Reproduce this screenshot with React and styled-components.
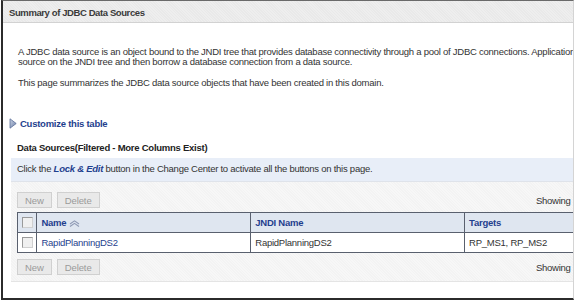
import React from 'react';
import styled, { createGlobalStyle } from 'styled-components';

const GlobalStyle = createGlobalStyle`
  html, body {
    margin: 0;
    padding: 0;
    background: #ffffff;
  }
  body {
    font-family: "Liberation Sans", Arial, sans-serif;
    font-size: 9.5px;
    letter-spacing: -0.25px;
    color: #333333;
  }
`;

const columns = [
  { key: 'name', label: 'Name', width: 214, sorted: true },
  { key: 'jndi', label: 'JNDI Name', width: 214 },
  { key: 'targets', label: 'Targets', width: 200 },
];

const rows = [
  { name: 'RapidPlanningDS2', jndi: 'RapidPlanningDS2', targets: 'RP_MS1, RP_MS2' },
];

export default function App() {
  return (
    <>
      <GlobalStyle />
      <Frame>
        <Header>Summary of JDBC Data Sources</Header>
        <Body>
          <Intro>
            A JDBC data source is an object bound to the JNDI tree that provides database connectivity through a pool of JDBC connections. Applications can look up a data
            <br />
            source on the JNDI tree and then borrow a database connection from a data source.
          </Intro>
          <Intro>This page summarizes the JDBC data source objects that have been created in this domain.</Intro>

          <Customize>
            <svg width="8" height="11" viewBox="0 0 8 11">
              <defs>
                <linearGradient id="tri" x1="0" y1="0" x2="1" y2="1">
                  <stop offset="0" stopColor="#c9d3e6" />
                  <stop offset="1" stopColor="#6c7fa6" />
                </linearGradient>
              </defs>
              <path d="M1 0.8 L7.2 5.5 L1 10.2 Z" fill="url(#tri)" stroke="#5c6f98" strokeWidth="0.8" strokeLinejoin="round" />
            </svg>
            <span>Customize this table</span>
          </Customize>

          <TableTitle>Data Sources(Filtered - More Columns Exist)</TableTitle>
          <InfoBand>
            Click the <em>Lock &amp; Edit</em> button in the Change Center to activate all the buttons on this page.
          </InfoBand>

          <TablePanel>
            <ButtonBar>
              <Button disabled>New</Button>
              <Button disabled>Delete</Button>
              <Showing>Showing 1 - 1 of 1</Showing>
            </ButtonBar>
            <Grid>
              <thead>
                <tr>
                  <CheckCell as="th" $head>
                    <Check />
                  </CheckCell>
                  {columns.map(col => (
                    <HeadCell key={col.key} style={{ width: col.width }}>
                      {col.label}
                      {col.sorted && (
                        <SortIcon width="11" height="7" viewBox="0 0 11 7">
                          <path d="M1 4 L5.5 0.8 L10 4 M1 6.5 L5.5 3.3 L10 6.5" fill="none" stroke="#8f9ab5" strokeWidth="1.1" />
                        </SortIcon>
                      )}
                    </HeadCell>
                  ))}
                </tr>
              </thead>
              <tbody>
                {rows.map(row => (
                  <tr key={row.name}>
                    <CheckCell>
                      <Check />
                    </CheckCell>
                    <Cell>
                      <RowLink>{row.name}</RowLink>
                    </Cell>
                    <Cell>{row.jndi}</Cell>
                    <Cell>{row.targets}</Cell>
                  </tr>
                ))}
              </tbody>
            </Grid>
            <ButtonBar $bottom>
              <Button disabled>New</Button>
              <Button disabled>Delete</Button>
              <Showing>Showing 1 - 1 of 1</Showing>
            </ButtonBar>
          </TablePanel>
        </Body>
      </Frame>
    </>
  );
}

const Frame = styled.div`
  width: 573px;
  height: 300px;
  margin-left: 1px;
  border-left: 2px solid #2b2b2b;
  border-top: 1px solid #6a6a6a;
  border-bottom: 2px solid #2b2b2b;
  border-right: 1px solid #d4d4d4;
  overflow: hidden;
  box-sizing: border-box;
  background: #ffffff;
`;

const Header = styled.div`
  height: 21px;
  line-height: 23px;
  padding-left: 6px;
  font-weight: bold;
  font-size: 9.5px;
  letter-spacing: -0.4px;
  color: #3a3a3a;
  background: repeating-linear-gradient(45deg, #e9e9e9 0 1px, #eeeeee 1px 2px);
  border-bottom: 1px solid #d2d2d2;
  white-space: nowrap;
`;

const Body = styled.div`
  width: 760px;
  padding: 24px 0 0 8px;
`;

const Intro = styled.p`
  margin: 0 0 11px 7px;
  line-height: 10px;
  white-space: nowrap;
`;

const Customize = styled.div`
  display: flex;
  align-items: center;
  gap: 3px;
  margin: 30px 0 0 -2px;
  font-weight: bold;
  color: #1f3f8e;

  svg {
    display: block;
  }
`;

const TableTitle = styled.div`
  margin: 13px 0 0 6px;
  font-weight: bold;
  color: #222222;
  line-height: 12px;
`;

const InfoBand = styled.div`
  margin-top: 4px;
  height: 23px;
  line-height: 22px;
  padding-left: 6px;
  background: #e8eef8;
  border-bottom: 1px solid #dfe3ea;
  white-space: nowrap;

  em {
    font-weight: bold;
    color: #1f3f8e;
  }
`;

const TablePanel = styled.div`
  padding: 10px 0 6px 6px;
  background: repeating-linear-gradient(45deg, #f3f3f3 0 1px, #f7f7f7 1px 2px);
  border-bottom: 1px solid #e4e4e4;
`;

const ButtonBar = styled.div`
  display: flex;
  align-items: center;
  gap: 5px;
  width: 591px;
  height: 16px;
  margin-top: ${p => (p.$bottom ? '6px' : '0')};
  margin-bottom: ${p => (p.$bottom ? '0' : '4px')};
`;

const Button = styled.button`
  height: 16px;
  padding: 0 7px;
  font-family: "Liberation Sans", Arial, sans-serif;
  font-size: 9.5px;
  letter-spacing: -0.1px;
  color: #9a9a9a;
  background: #e9e9e9;
  border: 1px solid #d0d0d0;
  border-radius: 0;
`;

const Showing = styled.span`
  margin-left: auto;
  color: #333333;
  white-space: nowrap;
`;

const Grid = styled.table`
  border-collapse: collapse;
  width: 649px;
  border: 1px solid #59606e;
  background: #ffffff;
`;

const CheckCell = styled.td`
  width: 19px;
  height: 19px;
  padding: 0;
  text-align: center;
  border: 1px solid #59606e;
  background: ${p => (p.$head ? '#dfe6f0' : '#ffffff')};
`;

const Check = styled.span`
  display: inline-block;
  vertical-align: middle;
  width: 9px;
  height: 9px;
  border: 1px solid #9a9a9a;
  border-right-color: #d0d0d0;
  border-bottom-color: #d0d0d0;
  background: #f0f0f0;
`;

const HeadCell = styled.th`
  height: 19px;
  padding: 0 4px;
  text-align: left;
  font-weight: bold;
  color: #1f3f8e;
  background: #dfe6f0;
  border: 1px solid #59606e;
  white-space: nowrap;
`;

const SortIcon = styled.svg`
  margin-left: 3px;
  vertical-align: middle;
`;

const Cell = styled.td`
  height: 17px;
  padding: 0 4px;
  color: #333333;
  border: 1px solid #59606e;
  white-space: nowrap;
`;

const RowLink = styled.span`
  color: #1f3f8e;
`;
